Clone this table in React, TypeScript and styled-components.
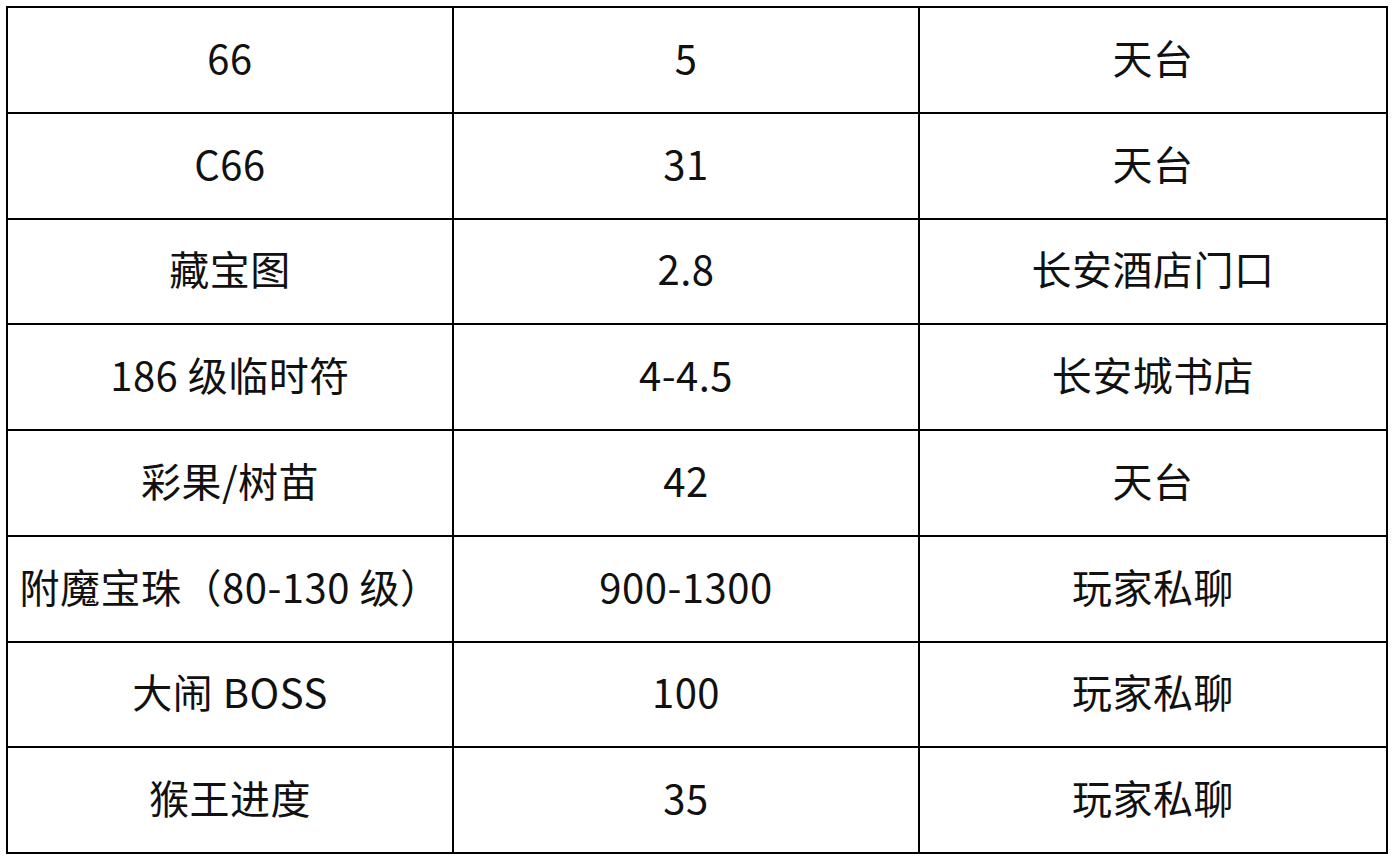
import React from "react";
import styled, { createGlobalStyle } from "styled-components";

const GlobalStyle = createGlobalStyle`
  html, body {
    margin: 0;
    padding: 0;
    background: #ffffff;
  }
  body {
    font-family: "Noto Sans CJK SC", "Noto Sans", sans-serif;
  }
`;

const Page = styled.div`
  width: 1394px;
  height: 864px;
  padding: 6px;
  box-sizing: border-box;
  background: #ffffff;
`;

const Grid = styled.div`
  display: grid;
  grid-template-columns: 444px 464px 466px;
  grid-template-rows: repeat(8, 1fr);
  gap: 2px;
  padding: 2px;
  width: 1382px;
  height: 848px;
  box-sizing: border-box;
  background: #000000;
`;

const Cell = styled.div`
  display: flex;
  align-items: center;
  justify-content: center;
  padding-bottom: 6px;
  box-sizing: border-box;
  background: #ffffff;
  color: #111111;
  font-family: "Noto Sans CJK SC", "Noto Sans", sans-serif;
  font-size: 40px;
  letter-spacing: 0.5px;
  white-space: nowrap;
`;

const rows: [string, string, string][] = [
  ["66", "5", "天台"],
  ["C66", "31", "天台"],
  ["藏宝图", "2.8", "长安酒店门口"],
  ["186 级临时符", "4-4.5", "长安城书店"],
  ["彩果/树苗", "42", "天台"],
  ["附魔宝珠（80-130 级）", "900-1300", "玩家私聊"],
  ["大闹 BOSS", "100", "玩家私聊"],
  ["猴王进度", "35", "玩家私聊"],
];

export default function App() {
  return (
    <>
      <GlobalStyle />
      <Page>
        <Grid>
          {rows.map((row, i) =>
            row.map((text, j) => <Cell key={`${i}-${j}`}>{text}</Cell>)
          )}
        </Grid>
      </Page>
    </>
  );
}
